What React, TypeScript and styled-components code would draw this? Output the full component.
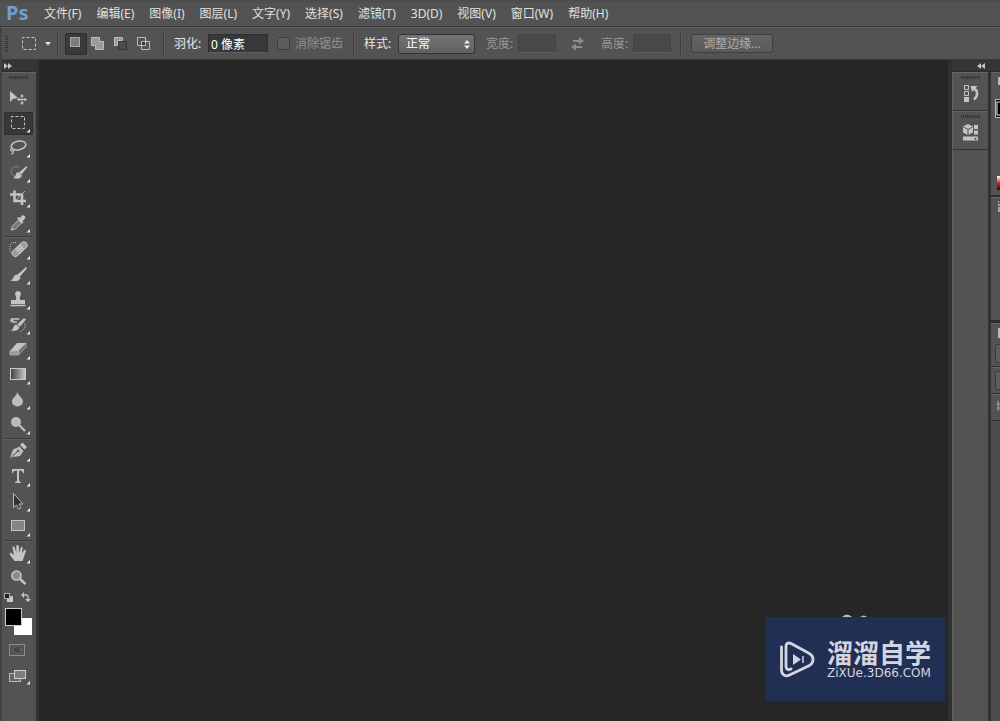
import React from 'react';
import styled, { createGlobalStyle, css } from 'styled-components';

const sans = '"Noto Sans", "Noto Sans CJK SC", sans-serif';

const GlobalStyle = createGlobalStyle`
  *, *::before, *::after { box-sizing: border-box; }
  body { margin: 0; background: #262626; font: 12px/16px ${sans}; color: #dcdcdc; overflow: hidden; }
  button, input, select { font: inherit; color: inherit; margin: 0; padding: 0; border: 0; background: none; border-radius: 0; }
  svg { display: block; }
`;

const Shell = styled.div`
  display: flex;
  flex-direction: column;
  min-height: 100vh;
`;

const MenuBar = styled.nav`
  display: flex;
  align-items: center;
  gap: 15px;
  height: 27px;
  padding: 1px 0 0 6px;
  background: linear-gradient(#4b4b4b, #535353 4px);
  border-bottom: 1px solid #3a3a3a;
`;

const Logo = styled.span`
  width: 23px;
  padding-bottom: 2px;
  font: bold 20px/24px "Noto Sans", sans-serif;
  color: #719fd0;
`;

const MenuItem = styled.button`
  height: 24px;
  color: #e0e0e0;
  white-space: nowrap;
`;

const OptionsBar = styled.form`
  display: flex;
  align-items: center;
  height: 33px;
  background: #535353;
  border-top: 1px solid #626262;
  border-bottom: 1px solid #3c3c3c;
  border-left: 2px solid #444;
  white-space: nowrap;
`;

const Grip = styled.div<{ $vertical?: boolean }>`
  ${p => p.$vertical
    ? css`width: 3px; height: 18px; margin: 0 14px 0 3px;
        background: repeating-linear-gradient(#353535 0 1px, #555 1px 2px);`
    : css`width: 19px; height: 3px; margin: 0 auto;
        background: repeating-linear-gradient(90deg, #353535 0 1px, #4c4c4c 1px 2px);`}
`;

const Divider = styled.div<{ $tight?: boolean }>`
  width: 2px;
  height: 22px;
  margin: ${p => (p.$tight ? '0 6px 0 5px' : '0 9px')};
  background: #3d3d3d;
  border-right: 1px solid #5c5c5c;
`;

const PresetButton = styled.button`
  display: flex;
  align-items: center;
  gap: 8px;
  width: 30px;
`;

const ModeGroup = styled.div`
  display: flex;
  gap: 1px;
  margin-right: -2px;
`;

const ModeButton = styled.button<{ $active?: boolean }>`
  display: flex;
  align-items: flex-start;
  width: 22px;
  height: 22px;
  padding: 3px 0 0 ${p => (p.$active ? 3 : 2)}px;
  border: 1px solid transparent;
  border-radius: 2px;
  ${p => p.$active && css`background: #3a3a3a; border-color: #2d2d2d;`}
`;

const Field = styled.label<{ $dim?: boolean }>`
  display: flex;
  align-items: center;
  gap: ${p => (p.$dim ? 4 : 6)}px;
  color: ${p => (p.$dim ? '#999' : '#e8e8e8')};
`;

const FieldName = styled.span`
  width: 28px;
`;

const NumberBox = styled.input<{ $wide?: boolean }>`
  width: ${p => (p.$wide ? 60 : 38)}px;
  height: 19px;
  padding: 0 2px;
  color: #fff;
  background: ${p => (p.$wide ? '#383838' : '#494949')};
  border: 1px solid ${p => (p.$wide ? '#303030' : '#444')};
  border-bottom-color: #5e5e5e;
`;

const CheckField = styled.label`
  display: flex;
  align-items: center;
  gap: 5px;
  margin: 0 1px 0 9px;
  color: #949494;
`;

const CheckBox = styled.input`
  appearance: none;
  width: 13px;
  height: 13px;
  border: 1px solid #3f3f3f;
  border-radius: 2px;
  background: #5c5c5c;
`;

const SelectWrap = styled.span`
  position: relative;
  display: block;
  width: 77px;
  height: 20px;

  svg { position: absolute; right: 4px; top: 6px; pointer-events: none; }
`;

const SelectBox = styled.select`
  appearance: none;
  width: 100%;
  height: 100%;
  padding-left: 7px;
  color: #fff;
  background: linear-gradient(#747474, #606060);
  border: 1px solid #333;
  border-radius: 3px;
`;

const SwapButton = styled.button`
  margin: 0 16px 0 14px;
`;

const Spaced = styled.div`
  margin-left: 11px;
`;

const RefineButton = styled.button`
  width: 82px;
  height: 19px;
  line-height: 16px;
  color: #adadad;
  background: linear-gradient(#646464, #595959);
  border: 1px solid #3f3f3f;
  border-radius: 2px;
`;

const Body = styled.div`
  flex: 1;
  display: flex;
  align-items: stretch;
`;

const ToolColumn = styled.aside`
  display: flex;
  flex-direction: column;
  flex: 0 0 39px;
  border-left: 2px solid #424242;
  border-right: 3px solid #323232;
  background: #535353;
`;

const DockHeader = styled.button<{ $end?: boolean }>`
  display: flex;
  align-items: center;
  justify-content: ${p => (p.$end ? 'flex-end' : 'flex-start')};
  height: 12px;
  padding: 0 ${p => (p.$end ? 15 : 2)}px 0 2px;
  background: #353535;
  border-bottom: 1px solid #2c2c2c;
`;

const Tools = styled.div`
  display: flex;
  flex-direction: column;
  padding: 3px 3px 0 2px;
  border-top: 1px solid #646464;
`;

const ToolGroup = styled.div<{ $first?: boolean }>`
  display: flex;
  flex-direction: column;
  gap: 2px;
  padding: 1px 0;
  ${p => (p.$first ? css`margin-top: 7px;` : css`
    border-top: 1px solid #3b3b3b;
    box-shadow: inset 0 1px #5f5f5f;
    padding-top: 2px;
  `)}
`;

const ToolButton = styled.button<{ $active?: boolean }>`
  width: 29px;
  height: 23px;
  border-radius: 2px;
  ${p => p.$active && css`background: #383838; box-shadow: inset 0 0 0 1px #2e2e2e;`}
`;

const ColorButton = styled.button`
  width: 29px;
  height: 48px;
  margin-top: -2px;
`;

const Workspace = styled.main`
  flex: 1;
  display: flex;
  flex-direction: column;
  justify-content: flex-end;
  align-items: flex-end;
  padding: 0 3px 20px 0;
  background: #262626;
`;

const Peek = styled.svg`
  margin-right: 75px;
`;

const Watermark = styled.a`
  display: flex;
  align-items: center;
  gap: 12px;
  width: 180px;
  height: 84px;
  padding-left: 14px;
  color: #d3d5df;
  background: #212f55;
  text-decoration: none;
`;

const BrandText = styled.span`
  display: flex;
  flex-direction: column;
`;

const BrandName = styled.span`
  font: bold 26px/28px "Noto Sans CJK SC", sans-serif;
  white-space: nowrap;
`;

const BrandUrl = styled.span`
  font: 12px/14px "DejaVu Sans", sans-serif;
  white-space: nowrap;
`;

const Dock = styled.aside`
  display: flex;
  flex-direction: column;
  flex: 0 0 52px;
  border-left: 4px solid #303030;
  background: #323232;
  overflow: hidden;
`;

const DockColumns = styled.div`
  flex: 1;
  display: flex;
  gap: 3px;
`;

const IconColumn = styled.div`
  flex: 0 0 36px;
  background: #535353;
  border-left: 1px solid #616161;
`;

const IconPanel = styled.section`
  height: 39px;
  padding-top: 3px;
  border-top: 1px solid #666;
  border-bottom: 1px solid #323232;
`;

const PanelButton = styled.button`
  display: block;
  width: 24px;
  height: 24px;
  margin: 3px auto 0;
`;

const PanelColumn = styled.div`
  flex: 1;
  display: flex;
  flex-direction: column;
  background: #4d4d4d;
  overflow: hidden;
`;

const PanelSlice = styled.section<{ $height: number; $line?: number }>`
  height: ${p => p.$height}px;
  flex: none;
  background: #535353;
  border-top: 1px solid #666;
  border-bottom: ${p => p.$line ?? 1}px solid #2d2d2d;
`;

const light = '#c4c4c4';

const icons: Record<string, React.ReactNode> = {
  移动: <>
    <path d="M6 4v11l3-3 5-1z" fill={light} />
    <path d="M18 8v9M13.500 12.500h9" stroke={light} fill="none" />
    <path d="M18 7l-2 2.500h4zM18 18l-2-2.500h4zM13 12.500l2.500-2v4zM23 12.500l-2.500-2v4z" fill={light} />
  </>,
  矩形选框: <rect x="7.500" y="4.500" width="13" height="12" fill="none" stroke={light} strokeDasharray="3 2" strokeDashoffset="1" />,
  套索: <g fill="none" stroke={light} strokeWidth="1.500">
    <ellipse cx="14.500" cy="8.500" rx="7.500" ry="4.300" transform="rotate(-12 14.500 8.500)" />
    <path d="M9 11c-3 0-3 3-.5 3 2 0 2-2 0-2M9 14c1 1 0 3-2 3" strokeWidth="1.200" />
  </g>,
  快速选择: <>
    <path d="M15 5.500a5 5 0 1 0-4 9" fill="none" stroke="#a8a8a8" strokeDasharray="1.500 1" />
    <path d="M22.500 4l1 1-6 7.500-2.500-2z" fill={light} />
    <path d="M14 10l4 3.500c-1 3-4 4-9 2.500 3-.5 2-5 5-6z" fill={light} />
  </>,
  裁剪: <>
    <path d="M10.500 3.500v10.500H22M6 7.500h12V18" fill="none" stroke={light} strokeWidth="2.500" />
    <path d="M12 13l9-9" stroke="#a8a8a8" />
  </>,
  吸管: <>
    <path d="M7 18l1.500-4 6-6 3 3-6 6z" fill="#777" stroke={light} />
    <path d="M13 6l1.500-1 1.500 1 2-2.500c2-1 4 1 3 3L18.500 9l1 1.500-1.500 1z" fill={light} />
  </>,
  修复画笔: <>
    <path d="M12 3.500H8.500L6 6v6l2 3h3" fill="none" stroke={light} strokeDasharray="1 1" />
    <g transform="rotate(-43 15.500 10)">
      <rect x="6.500" y="7" width="18" height="6.500" rx="3" fill="#9c9c9c" stroke="#bdbdbd" />
      <rect x="12" y="7" width="7" height="6.500" fill="#c4c4c4" />
      <path d="M13 9h1m2 0h1m-4 2.500h1m2 0h1" stroke="#666" />
    </g>
  </>,
  画笔: <>
    <path d="M22 3l1 1.500-7.500 8.500-2.500-2z" fill={light} />
    <path d="M12.500 10.500l4 3c-1 4-5 4.500-10.500 3 3.500 0 3-5 6.500-6z" fill={light} />
  </>,
  仿制图章: <>
    <path d="M14 2a3 3 0 0 1 2.500 4.500c-1 1.500-1 3 0 4.500H21v4H7v-4h4.500c1-1.500 1-3 0-4.500A3 3 0 0 1 14 2z" fill={light} />
    <path d="M6.500 16.500h15" stroke={light} strokeWidth="1.500" />
  </>,
  历史记录画笔: <>
    <path d="M20 4l2 1.500-6 7-3-2z" fill={light} />
    <path d="M12 10.500l3.500 2.500c-1 3.500-4 4.500-9 3.500 3 0 2.500-5 5.500-6z" fill={light} />
    <path d="M7.500 5h8M13 8H8" fill="none" stroke={light} strokeWidth="1.500" />
    <path d="M6 8l1-4 3 3z" fill={light} />
    <path d="M21 9v5l-5 4" fill="none" stroke={light} strokeDasharray="1 1" />
  </>,
  橡皮擦: <>
    <path d="M13 4h9l-7.500 8H6z" fill="#c4c4c4" />
    <path d="M22 4v4l-7.500 8v-4z" fill="#6c6c6c" stroke="#b0b0b0" strokeWidth=".8" />
    <path d="M6 12h8.500v4H6z" fill="#9a9a9a" stroke="#b0b0b0" strokeWidth=".8" />
  </>,
  渐变: <>
    <defs><linearGradient id="grad"><stop stopColor="#3d3d3d" /><stop offset="1" stopColor="#ccc" /></linearGradient></defs>
    <rect x="6.500" y="4.500" width="15" height="11" fill="url(#grad)" stroke="#c8c8c8" />
  </>,
  模糊: <path d="M13.500 3c1 4 5.500 6 5.500 9.500a5.500 5 0 0 1-11 0C8 9 12.500 7 13.500 3z" fill="#bdbdbd" />,
  减淡: <><circle cx="12" cy="8" r="5" fill="#bcbcbc" /><path d="M15 11l6 6" stroke={light} strokeWidth="2" /></>,
  钢笔: <>
    <path d="M6 17l3-8.500 6.500-3 4 4.500-3.500 5-6.500 1z" fill="#bbb" />
    <path d="M16 4l2.500-2.500L23 6l-2.500 2.500z" fill={light} />
    <path d="M7 16.500l6-5.500" stroke="#555" /><circle cx="14" cy="10" r="1.300" fill="#555" />
  </>,
  文字: <path d="M8 3h12v4h-1c-.3-1.700-1-2.500-4-2.500V14c0 1.500.5 1.800 2 2v1h-6v-1c1.500-.2 2-.5 2-2V4.500C10 4.500 9.300 5.300 9 7H8z" fill={light} />,
  路径选择: <path d="M9.500 2.500v14l3-2.500 2 4 2.500-1-2-4h4z" fill="#333" stroke="#b8b8b8" />,
  矩形: <rect x="7.500" y="4.500" width="13" height="10" fill="#858585" stroke={light} />,
  抓手: <path d="M10.500 18L6 12c-1-2 1-3 2-1.500l2 1.500-1.500-7c0-2 2-2 2.500 0l1.300 5V3.500c0-2 2.400-2 2.600 0l.2 6.500 1.500-5c.5-2 2.400-1.500 2 .5l-.8 5 2-3c1-1.500 2.700-.5 2 1L18.500 18z" fill={light} />,
  缩放: <>
    <circle cx="12.500" cy="7.500" r="4.500" fill="#8c8c8c" stroke={light} strokeWidth="1.700" />
    <path d="M16 11l5.500 5" stroke={light} strokeWidth="2.500" />
  </>,
};

const groups = [
  ['移动', '矩形选框', '套索', '快速选择', '裁剪', '吸管'],
  ['修复画笔', '画笔', '仿制图章', '历史记录画笔', '橡皮擦', '渐变', '模糊', '减淡'],
  ['钢笔', '文字', '路径选择', '矩形'],
  ['抓手', '缩放'],
];

const noFlyout = ['移动', '缩放'];

const menus = ['文件(F)', '编辑(E)', '图像(I)', '图层(L)', '文字(Y)', '选择(S)', '滤镜(T)', '3D(D)', '视图(V)', '窗口(W)', '帮助(H)'];

const Flyout = () => <path d="M26 17v3.500h-3.500z" fill="#e8e8e8" />;

const Chevrons = ({ left }: { left?: boolean }) => (
  <svg width="8" height="6" viewBox="0 0 8 6" fill="#c4c4c4">
    {left ? <path d="M4 0v6L0 3zM8 0v6L4 3z" /> : <path d="M0 0v6l4-3zM4 0v6l4-3z" />}
  </svg>
);

const modeIcons = [
  ['新选区', <rect x="1.500" y=".5" width="9" height="9" fill="#7c7c7c" stroke="#a8a8a8" />],
  ['添加到选区', <path d="M.5.5h8v4h4v8h-8v-4h-4z" fill="#9a9a9a" stroke="#bdbdbd" />],
  ['从选区减去', <><path d="M4.500 12.500v-8h8v8z" fill="#4b4b4b" stroke="#353535" /><path d="M.5.500h8v3h-5v5h-3z" fill="#999" stroke="#bdbdbd" /></>],
  ['与选区交叉', <g fill="none" stroke="#bdbdbd"><path d="M.5.5h8v8h-8z" /><path d="M4.500 4.500h8v8h-8z" /><path d="M5 5h3v3H5z" fill="#333" stroke="none" /></g>],
] as const;

export default function App() {
  return (
    <Shell>
      <GlobalStyle />
      <MenuBar aria-label="主菜单">
        <Logo>Ps</Logo>
        {menus.map(m => <MenuItem key={m}>{m}</MenuItem>)}
      </MenuBar>

      <OptionsBar onSubmit={e => e.preventDefault()}>
        <Grip $vertical />
        <PresetButton type="button" aria-label="工具预设">
          <svg width="15" height="14" viewBox="0 0 15 14">
            <rect x=".5" y=".5" width="13" height="12" fill="none" stroke="#c8c8c8" strokeDasharray="3 2" strokeDashoffset="1" />
          </svg>
          <svg width="7" height="4" viewBox="0 0 7 4"><path d="M0 0h6L3 3.500z" fill="#e4e4e4" /></svg>
        </PresetButton>
        <Divider $tight />
        <ModeGroup>
          {modeIcons.map(([name, art], i) => (
            <ModeButton key={name} type="button" aria-label={name} $active={i === 0}>
              <svg width="13" height="13" viewBox="0 0 13 13">{art}</svg>
            </ModeButton>
          ))}
        </ModeGroup>
        <Divider />
        <Field><FieldName>羽化:</FieldName><NumberBox $wide defaultValue="0 像素" /></Field>
        <CheckField><CheckBox type="checkbox" disabled />消除锯齿</CheckField>
        <Divider />
        <Field>
          <FieldName>样式:</FieldName>
          <SelectWrap>
            <SelectBox defaultValue="正常"><option>正常</option></SelectBox>
            <svg width="7" height="9" viewBox="0 0 7 9" fill="#eee"><path d="M3 0l3 3.500H0zM3 9L0 5.500h6z" /></svg>
          </SelectWrap>
        </Field>
        <Spaced><Field $dim><FieldName>宽度:</FieldName><NumberBox disabled /></Field></Spaced>
        <SwapButton type="button" aria-label="交换宽度和高度">
          <svg width="15" height="14" viewBox="0 0 15 14" fill="#8c8c8c">
            <path d="M3 3h6V0l5 4-5 3.500V5H3zM12 9H6V6.500L1 10l5 3.500V11h6z" />
          </svg>
        </SwapButton>
        <Field $dim><FieldName>高度:</FieldName><NumberBox disabled /></Field>
        <Divider />
        <RefineButton type="button">调整边缘...</RefineButton>
      </OptionsBar>

      <Body>
        <ToolColumn>
          <DockHeader aria-label="展开工具栏"><Chevrons /></DockHeader>
          <Tools>
            <Grip />
            {groups.map((g, gi) => (
              <ToolGroup key={gi} $first={gi === 0}>
                {g.map(name => (
                  <ToolButton key={name} aria-label={name} $active={name === '矩形选框'}>
                    <svg width="29" height="23" viewBox="0 0 29 23">
                      {icons[name]}
                      {!noFlyout.includes(name) && <Flyout />}
                    </svg>
                  </ToolButton>
                ))}
              </ToolGroup>
            ))}
            <ColorButton aria-label="前景色和背景色">
              <svg width="29" height="48" viewBox="0 0 29 48">
                <rect x="3" y="6" width="6" height="6" fill="#c8c8c8" />
                <rect x=".5" y="3.500" width="5" height="5" fill="#222" stroke="#aaa" />
                <path d="M19 5h3q2 0 2 2v3" fill="none" stroke={light} strokeWidth="1.300" />
                <path d="M17 5l3-3v6zM24 12l-3-3h6z" fill={light} />
                <rect x="10" y="28" width="18" height="17" fill="#fff" />
                <rect x="1.500" y="18.500" width="16" height="17" fill="#000" stroke="#ccc" />
              </svg>
            </ColorButton>
            <ToolButton aria-label="快速蒙版">
              <svg width="29" height="23" viewBox="0 0 29 23" fill="none" stroke="#8c8c8c">
                <rect x="5.500" y="6.500" width="15" height="11" />
                <circle cx="13" cy="12" r="4" strokeDasharray="1 1" fill="#484848" />
              </svg>
            </ToolButton>
            <ToolButton aria-label="屏幕模式">
              <svg width="29" height="27" viewBox="0 0 29 27">
                <rect x="5.500" y="12.500" width="11" height="8" fill="#666" stroke="#bbb" />
                <rect x="10.500" y="9.500" width="11" height="8" fill="#7d7d7d" stroke="#d0d0d0" />
                <path d="M26 20v3.500h-3.500z" fill="#e8e8e8" />
              </svg>
            </ToolButton>
          </Tools>
        </ToolColumn>

        <Workspace>
          <Peek width="30" height="3" viewBox="0 0 30 3" fill="#bdbdbd">
            <path d="M2 3q5-5 10 0zM20 3q4-3 7 0z" />
          </Peek>
          <Watermark href="#">
            <svg width="36" height="37" viewBox="0 0 36 37" fill="none" stroke="#d3d5df" strokeWidth="2.800" strokeLinecap="round">
              <path d="M2.500 6v23c0 5 4 7 8 5l19-9c6-3 6-10 0-13L13 3C9 1 7 2 7 6v19c0 4 3 4 5 3" />
              <path d="M14 13v11l8-5.500z" fill="#d3d5df" stroke="none" />
              <path d="M24 15v7" strokeWidth="1.500" strokeLinecap="butt" />
            </svg>
            <BrandText>
              <BrandName>溜溜自学</BrandName>
              <BrandUrl>ZiXUe.3D66.COM</BrandUrl>
            </BrandText>
          </Watermark>
        </Workspace>

        <Dock>
          <DockHeader $end aria-label="折叠面板"><Chevrons left /></DockHeader>
          <DockColumns>
            <IconColumn>
              <IconPanel>
                <Grip />
                <PanelButton aria-label="历史记录">
                  <svg width="24" height="24" viewBox="0 0 24 24">
                    <path d="M5.500 3.500h4v4h-4zM5.500 9.500h4v4h-4z" fill="none" stroke={light} />
                    <path d="M5 15h5v5H5z" fill={light} />
                    <path d="M14 6.500c5 1 5.500 7 1 11" fill="none" stroke={light} strokeWidth="2.500" />
                    <path d="M11.500 4h7l-5.500 6z" fill={light} />
                  </svg>
                </PanelButton>
              </IconPanel>
              <IconPanel>
                <Grip />
                <PanelButton aria-label="属性">
                  <svg width="24" height="24" viewBox="0 0 24 24">
                    <path d="M9 3l5 2.500v6L9 14l-5-2.500v-6z" fill={light} />
                    <path d="M4.500 6L9 8.500 13.500 6M9 8.500V14" fill="none" stroke="#555" />
                    <path d="M15 4h4v4h-4zM15 9.500h4v4h-4zM4 15.500h15v4H4z" fill={light} />
                    <path d="M15 17h3l-1.500 2z" fill="#444" />
                  </svg>
                </PanelButton>
              </IconPanel>
            </IconColumn>
            <PanelColumn>
              <PanelSlice $height={125} $line={2}>
                <svg width="9" height="122" viewBox="0 0 9 122">
                  <defs><linearGradient id="ramp" x2="0" y2="1"><stop stopColor="#fff" /><stop offset=".5" stopColor="#e02010" /><stop offset="1" stopColor="#300" /></linearGradient></defs>
                  <path d="M7 4h2v8H7z" fill="#b8b8b8" />
                  <rect x="4.500" y="26.500" width="8" height="18" fill="#000" stroke="#bbb" />
                  <rect x="6" y="29" width="6" height="13" fill="#000" stroke="#eee" />
                  <rect x="6" y="103" width="6" height="14" fill="url(#ramp)" />
                </svg>
              </PanelSlice>
              <PanelSlice $height={126} $line={3}>
                <svg width="9" height="20" viewBox="0 0 9 20"><path d="M7 7h2M7 4h1M8 9v5" stroke="#b4c8d0" strokeWidth="1.500" /></svg>
              </PanelSlice>
              <PanelSlice $height={44}>
                <svg width="9" height="42" viewBox="0 0 9 42">
                  <path d="M7 4h2v10H7z" fill="#b8b8b8" />
                  <rect x="4.500" y="20.500" width="10" height="18" rx="2" fill="#5c5c5c" stroke="#3b3b3b" />
                </svg>
              </PanelSlice>
              <PanelSlice $height={27}>
                <svg width="9" height="25" viewBox="0 0 9 25">
                  <rect x="4.500" y="3.500" width="10" height="18" rx="2" fill="#5c5c5c" stroke="#3b3b3b" />
                </svg>
              </PanelSlice>
              <PanelSlice $height={27}>
                <svg width="9" height="24" viewBox="0 0 9 24"><path d="M7 6v10M6 9h3M6 13h3" stroke="#aaa" fill="none" /></svg>
              </PanelSlice>
            </PanelColumn>
          </DockColumns>
        </Dock>
      </Body>
    </Shell>
  );
}
